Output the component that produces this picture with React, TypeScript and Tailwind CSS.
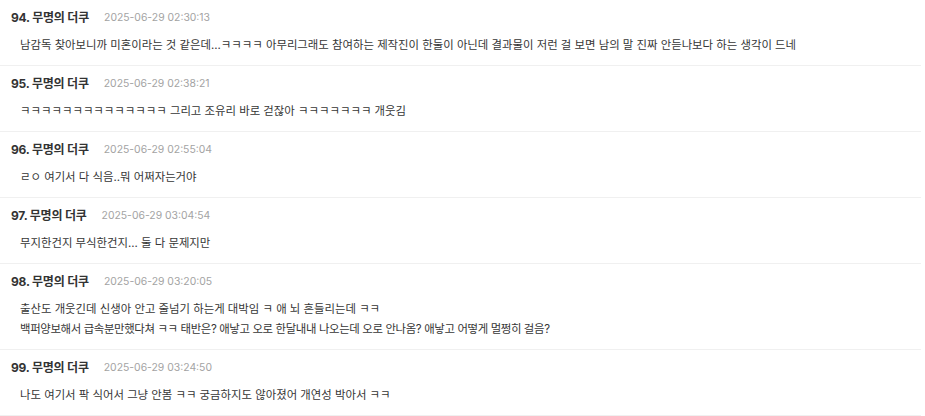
import React from "react";

type Line = { text: string; cls?: string };
type Comment = { no: number; date: string; lines: Line[] };

const comments: Comment[] = [
  {
    no: 94,
    date: "2025-06-29 02:30:13",
    lines: [
      {
        text: "남감독 찾아보니까 미혼이라는 것 같은데...ㅋㅋㅋㅋ 아무리그래도 참여하는 제작진이 한둘이 아닌데 결과물이 저런 걸 보면 남의 말 진짜 안듣나보다 하는 생각이 드네",
      },
    ],
  },
  {
    no: 95,
    date: "2025-06-29 02:38:21",
    lines: [{ text: "ㅋㅋㅋㅋㅋㅋㅋㅋㅋㅋㅋㅋㅋㅋ 그리고 조유리 바로 걷잖아 ㅋㅋㅋㅋㅋㅋㅋ 개웃김" }],
  },
  {
    no: 96,
    date: "2025-06-29 02:55:04",
    lines: [{ text: "ㄹㅇ 여기서 다 식음..뭐 어쩌자는거야" }],
  },
  {
    no: 97,
    date: "2025-06-29 03:04:54",
    lines: [{ text: "무지한건지 무식한건지... 둘 다 문제지만" }],
  },
  {
    no: 98,
    date: "2025-06-29 03:20:05",
    lines: [
      { text: "출산도 개웃긴데 신생아 안고 줄넘기 하는게 대박임 ㅋ 애 뇌 흔들리는데 ㅋㅋ" },
      {
        text: "백퍼양보해서 급속분만했다쳐 ㅋㅋ 태반은? 애낳고 오로 한달내내 나오는데 오로 안나옴? 애낳고 어떻게 멀쩡히 걸음?",
        cls: "tracking-[-0.35px]",
      },
    ],
  },
  {
    no: 99,
    date: "2025-06-29 03:24:50",
    lines: [{ text: "나도 여기서 팍 식어서 그냥 안봄 ㅋㅋ 궁금하지도 않아졌어 개연성 박아서 ㅋㅋ" }],
  },
];

export default function App() {
  return (
    <div
      className="w-[925px] h-[416px] overflow-hidden bg-white"
      style={{ fontFamily: '"Inter", "Noto Sans CJK KR", sans-serif' }}
    >
      <ul className="w-[921px]">
        {comments.map((c) => (
          <li key={c.no} className="border-b border-[#f0f0f0] pt-[11px] pb-[10px]">
            <div className="flex items-center h-[14px] pl-[11px]">
              <span className="text-[12px] font-bold text-[#333333] tracking-[-0.2px]">
                {c.no}. 무명의 더쿠
              </span>
              <span className="ml-[15px] text-[10.4px] text-[#a3a3a3]">{c.date}</span>
            </div>
            <div className="mt-[10px] pl-[20px] text-[11.4px] leading-[20px] text-[#363636]">
              {c.lines.map((l, i) => (
                <p key={i} className={l.cls}>
                  {l.text}
                </p>
              ))}
            </div>
          </li>
        ))}
      </ul>
    </div>
  );
}
